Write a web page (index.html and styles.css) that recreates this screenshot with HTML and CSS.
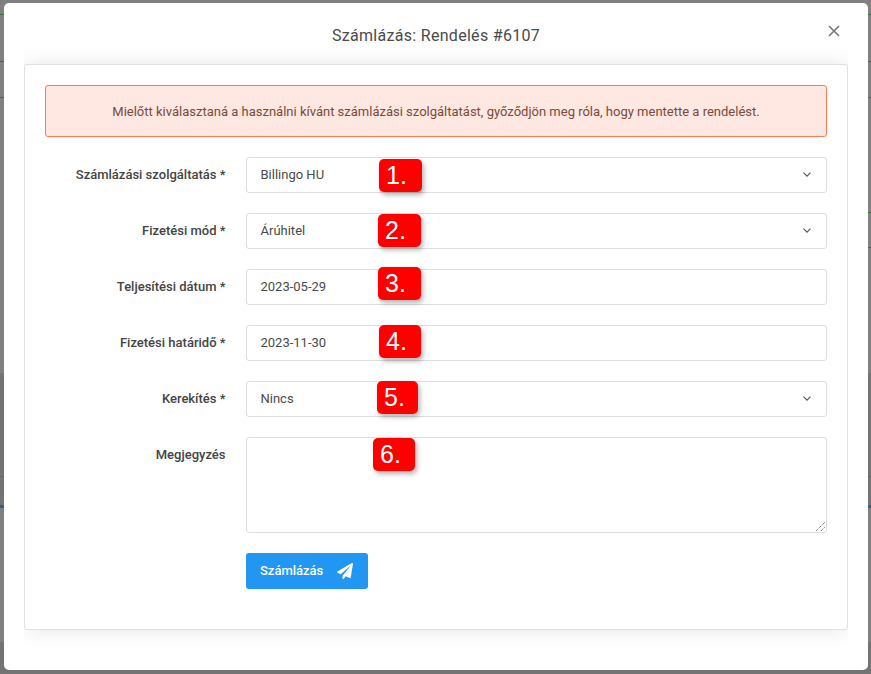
FILE: index.html
```html
<!DOCTYPE html>
<html lang="hu">
<head>
<meta charset="utf-8">
<title>Számlázás</title>
<link rel="stylesheet" href="styles.css">
</head>
<body>
<div class="backdrop">
  <div class="modal">
    <header class="modal-head">
      <h1 class="modal-title">Számlázás: Rendelés #6107</h1>
      <button class="close" aria-label="Bezárás">
        <svg width="12" height="12" viewBox="0 0 12 12"><path d="M1 1l10 10M11 1L1 11" stroke="#7a7a7a" stroke-width="1.7" fill="none"/></svg>
      </button>
    </header>
    <div class="panel">
      <div class="alert">Mielőtt kiválasztaná a használni kívánt számlázási szolgáltatást, győződjön meg róla, hogy mentette a rendelést.</div>
      <div class="row">
        <label class="label">Számlázási szolgáltatás *</label>
        <div class="field select">Billingo HU<svg class="chev" width="8" height="5" viewBox="0 0 8 5"><path d="M.5.7L4 4.200 7.500.7" stroke="#555" stroke-width="1.1" fill="none"/></svg><span class="tag tag1">1.</span></div>
      </div>
      <div class="row">
        <label class="label">Fizetési mód *</label>
        <div class="field select">Árúhitel<svg class="chev" width="8" height="5" viewBox="0 0 8 5"><path d="M.5.7L4 4.200 7.500.7" stroke="#555" stroke-width="1.1" fill="none"/></svg><span class="tag tag2">2.</span></div>
      </div>
      <div class="row">
        <label class="label">Teljesítési dátum *</label>
        <div class="field">2023-05-29<span class="tag tag3">3.</span></div>
      </div>
      <div class="row">
        <label class="label">Fizetési határidő *</label>
        <div class="field">2023-11-30<span class="tag tag4">4.</span></div>
      </div>
      <div class="row">
        <label class="label">Kerekítés *</label>
        <div class="field select">Nincs<svg class="chev" width="8" height="5" viewBox="0 0 8 5"><path d="M.5.7L4 4.200 7.500.7" stroke="#555" stroke-width="1.1" fill="none"/></svg><span class="tag tag5">5.</span></div>
      </div>
      <div class="row">
        <label class="label">Megjegyzés</label>
        <div class="field area"><span class="tag tag6">6.</span>
          <svg class="grip" width="11" height="11" viewBox="0 0 11 11"><path d="M1 10l9-9M6 10l4-4" stroke="#444" stroke-width="1" stroke-dasharray="1 1" fill="none"/></svg>
        </div>
      </div>
      <div class="row actions">
        <button class="submit"><span class="submit-text">Számlázás</span>
          <svg width="16" height="16" viewBox="0 0 512 512"><path fill="#fff" d="M476 3.200L12.500 270.600c-18.100 10.400-15.800 35.600 2.200 43.200L121 358.400l287.300-253.200c5.500-4.900 13.300 2.600 8.600 8.300L176 407v80.500c0 23.600 28.500 32.900 42.500 15.800L282 426l124.600 52.200c14.200 6 30.400-2.900 33-18.200l72-432C515 7.800 493.300-6.800 476 3.200z"/></svg>
        </button>
      </div>
    </div>
  </div>
</div>
</body>
</html>
```

FILE: styles.css
```css
* { box-sizing: border-box; }
html, body { margin: 0; height: 100%; }
body {
  font-family: Roboto, "Liberation Sans", sans-serif;
  background: #7f7f7f;
  overflow: hidden;
}
.backdrop {
  width: 871px;
  height: 674px;
  padding: 3px 3px 4px 4px;
  background-color: #808080;
  background-image:
    linear-gradient(#3f6f3f, #3f6f3f),
    linear-gradient(#3f6f3f, #3f6f3f),
    linear-gradient(#3f6f3f, #3f6f3f),
    linear-gradient(#3f6f3f, #3f6f3f),
    linear-gradient(#3f6f3f, #3f6f3f),
    linear-gradient(#2f5f8a, #2f5f8a),
    linear-gradient(#666, #666),
    linear-gradient(#747474, #747474),
    linear-gradient(#747474, #747474);
  background-repeat: no-repeat;
  background-size: 100% 1px, 100% 1px, 100% 1px, 3px 1px, 3px 1px, 100% 3px, 100% 1px, 100% 133px, 100% 32px;
  background-position: 0 14px, 0 61px, 0 97px, right 0 top 212px, right 0 top 247px, 0 505px, 0 476px, 0 373px, 0 642px;
}
.modal {
  width: 864px;
  height: 667px;
  background: #fff;
  border-radius: 5px;
  padding: 0 20px;
  display: flex;
  flex-direction: column;
}
.modal-head {
  height: 61px;
  flex: none;
  position: relative;
  display: flex;
  align-items: center;
  justify-content: center;
}
.modal-title {
  margin: 4px 0 0;
  font-size: 16px;
  font-weight: 400;
  color: #4a4a4a;
  letter-spacing: 0.3px;
}
.close {
  position: absolute;
  right: 8px;
  top: 22px;
  width: 12px;
  height: 12px;
  padding: 0;
  border: 0;
  background: none;
  display: flex;
}
.panel {
  height: 566px;
  border: 1px solid #e0e0e0;
  border-radius: 3px;
  padding: 20px;
  background: #fff;
  box-shadow: 0 0 20px rgba(0, 0, 0, 0.1);
  clip-path: inset(-20px 0);
  display: flex;
  flex-direction: column;
  gap: 20px;
}
.alert {
  height: 52px;
  flex: none;
  border: 1px solid #ff7a50;
  border-radius: 3px;
  background: #ffe7e2;
  color: #7a4a3a;
  font-size: 13px;
  display: flex;
  align-items: center;
  justify-content: center;
}
.row {
  display: flex;
  flex: none;
  gap: 20.5px;
}
.label {
  width: 180.5px;
  flex: none;
  text-align: right;
  font-size: 13px;
  font-weight: 500;
  color: #444;
  line-height: 36px;
  white-space: nowrap;
}
.field {
  position: relative;
  width: 581px;
  height: 36px;
  border: 1px solid #ddd;
  border-radius: 3px;
  padding: 0 13.5px;
  font-size: 13px;
  color: #4a4a4a;
  line-height: 34px;
  background: #fff;
}
.area { height: 96px; }
.chev { position: absolute; right: 15px; top: 14px; }
.grip { position: absolute; right: 0; bottom: 0; }
.tag {
  position: absolute;
  background: #fe0000;
  color: #fff;
  border-radius: 5px;
  font-family: "Liberation Sans", Arial, sans-serif;
  font-size: 25px;
  line-height: 33px;
  height: 33px;
  padding-left: 7px;
  box-shadow: 2px 3px 5px rgba(0, 0, 0, 0.3);
}
.tag1 { left: 132px; top: 1px; width: 43px; }
.tag2 { left: 131px; top: 0; width: 43px; }
.tag3 { left: 131px; top: -3px; width: 43px; }
.tag4 { left: 132px; top: -1px; width: 42px; }
.tag5 { left: 130px; top: -1px; width: 41px; }
.tag6 { left: 126px; top: 0; width: 42px; }
.actions { padding-left: 201px; }
.submit {
  width: 122px;
  height: 36px;
  border: 0;
  border-radius: 3px;
  background: #2196f3;
  color: #fff;
  font-family: inherit;
  font-size: 13px;
  font-weight: 500;
  padding: 0 15px 0 14px;
  display: flex;
  align-items: center;
  justify-content: space-between;
}
.submit-text { margin-top: -2px; }
```
